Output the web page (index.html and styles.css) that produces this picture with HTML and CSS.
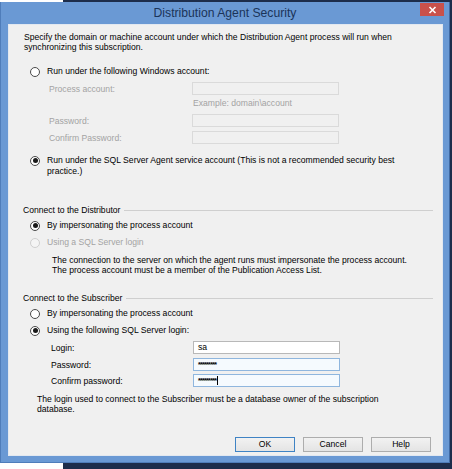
FILE: index.html
```html
<!DOCTYPE html>
<html>
<head>
<meta charset="utf-8">
<title>Distribution Agent Security</title>
<link rel="stylesheet" href="styles.css">
</head>
<body>
<div class="window">
  <div class="titlebar">
    <span class="title">Distribution Agent Security</span>
    <span class="close"><svg width="9" height="8" viewBox="0 0 9 8"><path d="M1.5 1 L7.5 7 M7.5 1 L1.5 7" stroke="#fff" stroke-width="1.6"/></svg></span>
  </div>
  <div class="content">
    <p class="intro">Specify the domain or machine account under which the Distribution Agent process will run when<br>synchronizing this subscription.</p>

    <div class="radio-row r-win"><span class="radio"></span><span>Run under the following Windows account:</span></div>
    <div class="field f-proc disabled"><span class="label">Process account:</span><span class="input"></span></div>
    <div class="example">Example: domain\account</div>
    <div class="field f-pw disabled"><span class="label">Password:</span><span class="input"></span></div>
    <div class="field f-cpw disabled"><span class="label">Confirm Password:</span><span class="input"></span></div>

    <div class="radio-row r-sql"><span class="radio checked"></span><span>Run under the SQL Server Agent service account (This is not a recommended security best<br>practice.)</span></div>

    <div class="group g-dist"><span>Connect to the Distributor</span><span class="rule"></span></div>
    <div class="radio-row r-d1"><span class="radio checked"></span><span>By impersonating the process account</span></div>
    <div class="radio-row r-d2 disabled"><span class="radio"></span><span>Using a SQL Server login</span></div>
    <p class="note n-dist">The connection to the server on which the agent runs must impersonate the process account.<br>The process account must be a member of the Publication Access List.</p>

    <div class="group g-sub"><span>Connect to the Subscriber</span><span class="rule"></span></div>
    <div class="radio-row r-s1"><span class="radio"></span><span>By impersonating the process account</span></div>
    <div class="radio-row r-s2"><span class="radio checked"></span><span>Using the following SQL Server login:</span></div>
    <div class="field sub f-login"><span class="label">Login:</span><span class="input active">sa</span></div>
    <div class="field sub f-spw"><span class="label">Password:</span><span class="input focus"><span class="mask">*********</span></span></div>
    <div class="field sub f-scpw"><span class="label">Confirm password:</span><span class="input focus"><span class="mask">*********</span><span class="caret"></span></span></div>
    <p class="note n-sub">The login used to connect to the Subscriber must be a database owner of the subscription<br>database.</p>

    <div class="buttons">
      <span class="btn default">OK</span>
      <span class="btn">Cancel</span>
      <span class="btn">Help</span>
    </div>
  </div>
</div>
</body>
</html>
```
FILE: styles.css
```css
html, body {
  margin: 0;
  padding: 0;
}
body {
  width: 452px;
  height: 469px;
  overflow: hidden;
  background: linear-gradient(to right, #ffffff 63px, #1d2d4b 63px);
  font-family: "Liberation Sans", Arial, sans-serif;
  font-size: 8.6px;
  color: #000;
}
.window {
  margin-top: 2px;
  width: 450px;
  height: 461px;
  box-sizing: border-box;
  background: #6a99d4;
  border-left: 1px solid #4f7dba;
  border-right: 1px solid #3f69a3;
  border-bottom: 1px solid #4f7dba;
  display: flex;
  flex-direction: column;
}
.titlebar {
  height: 22px;
  display: grid;
  grid-template-columns: 1fr auto 1fr;
  align-items: start;
}
.title {
  grid-column: 2;
  font-size: 12.2px;
  color: #1b3459;
  line-height: 22px;
}
.close {
  grid-column: 3;
  justify-self: end;
  margin-top: 1px;
  margin-right: 5px;
  width: 24px;
  height: 13px;
  background: #c9514b;
  display: flex;
  align-items: center;
  justify-content: center;
}
.content {
  margin-left: 7px;
  width: 435px;
  height: 432px;
  background: #f0f0f0;
  box-sizing: border-box;
  border: 1px solid #e2e8f0;
  display: flex;
  flex-direction: column;
}
p { margin: 0; }
.intro {
  margin-top: 7px;
  padding-left: 15px;
  line-height: 10px;
}
.radio-row {
  display: flex;
  align-items: flex-start;
  padding-left: 21px;
  line-height: 11px;
}
.radio {
  flex: none;
  width: 10px;
  height: 10px;
  box-sizing: border-box;
  border: 1px solid #4a4a4a;
  border-radius: 50%;
  background: #fff;
  margin-top: 0.5px;
  margin-right: 7px;
  display: flex;
  align-items: center;
  justify-content: center;
}
.radio.checked::after {
  content: "";
  width: 5px;
  height: 5px;
  border-radius: 50%;
  background: #1a1a1a;
}
.disabled { color: #a3a3a3; }
.radio-row.disabled .radio {
  border-color: #cfcfcf;
  background: #f4f4f4;
}
.field {
  display: flex;
  align-items: center;
  height: 13px;
  padding-left: 40px;
}
.field .label { width: 143px; }
.field.sub { padding-left: 42px; }
.field.sub .label { width: 142px; }
.input {
  width: 147px;
  height: 13px;
  box-sizing: border-box;
  border: 1px solid #dadada;
  background: #f0f0f0;
  display: flex;
  align-items: center;
  padding-left: 4px;
  line-height: 11px;
}
.input.active {
  background: #fff;
  border-color: #b8b8b8;
}
.input.focus {
  background: #f5fafe;
  border-color: #8fb6de;
}
.mask {
  font-size: 7px;
  font-weight: bold;
  letter-spacing: -0.7px;
  line-height: 7px;
  margin-top: -1px;
}
.caret {
  width: 1px;
  height: 9px;
  background: #000;
  margin-left: 1px;
}
.example {
  color: #a3a3a3;
  padding-left: 184px;
  line-height: 11px;
}
.group {
  display: flex;
  align-items: center;
  padding-left: 14px;
  padding-right: 9px;
  line-height: 11px;
}
.group .rule {
  flex: 1;
  height: 1px;
  background: #cfcfcf;
  margin-left: 4px;
}
.note {
  line-height: 10px;
}
.n-dist { padding-left: 43px; }
.n-sub { padding-left: 28px; }
.buttons {
  display: flex;
  justify-content: flex-end;
  gap: 8px;
  padding-right: 11px;
}
.btn {
  width: 60px;
  height: 15px;
  box-sizing: border-box;
  border: 1px solid #adadad;
  background: linear-gradient(#f2f2f2, #e4e4e4);
  display: flex;
  align-items: center;
  justify-content: center;
  line-height: 11px;
}
.btn.default { border-color: #3f83c4; }

.r-win { margin-top: 14px; }
.f-proc { margin-top: 5px; }
.example { margin-top: 3px; }
.f-pw { margin-top: 5px; }
.f-cpw { margin-top: 4px; }
.r-sql { margin-top: 11px; }
.g-dist { margin-top: 28px; }
.r-d1 { margin-top: 4px; }
.r-d2 { margin-top: 6px; }
.n-dist { margin-top: 7px; }
.g-sub { margin-top: 18px; }
.r-s1 { margin-top: 4px; }
.r-s2 { margin-top: 6px; }
.f-login { margin-top: 5px; }
.f-spw { margin-top: 4px; }
.f-scpw { margin-top: 3px; }
.n-sub { margin-top: 7px; }
.buttons { margin-top: 23px; }
```
